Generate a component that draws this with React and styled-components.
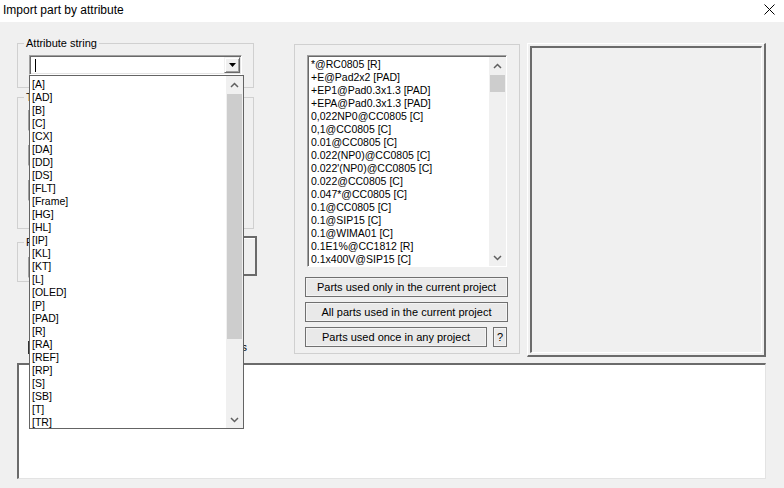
import React from "react";
import styled, { createGlobalStyle } from "styled-components";

const GlobalStyle = createGlobalStyle`
  html, body { margin: 0; padding: 0; background: #f0f0f0; }
  * { box-sizing: border-box; }
`;

const Window = styled.div`
  width: 784px;
  height: 488px;
  background: #f0f0f0;
  display: flex;
  flex-direction: column;
  overflow: hidden;
  font-family: "Liberation Sans", Arial, sans-serif;
  color: #000;
`;

const TitleBar = styled.div`
  height: 22px;
  flex: none;
  background: #fff;
  display: flex;
  align-items: flex-start;
  justify-content: space-between;
  padding: 3px 9px 0 3px;
  font-size: 12px;
  line-height: 14px;
`;

const CloseGlyph = styled.svg`
  margin-top: 1px;
`;

const Body = styled.div`
  flex: 1;
  display: flex;
  flex-direction: column;
  padding: 15px 18px 0 17px;
`;

const TopRow = styled.div`
  display: flex;
  align-items: flex-start;
`;

const LeftColumn = styled.div`
  width: 240px;
  flex: none;
  display: flex;
  flex-direction: column;
`;

const Group = styled.fieldset`
  margin: ${(p) => p.$mt || 0}px 0 0 0;
  padding: 0 ${(p) => p.$pr ?? 11}px ${(p) => p.$pb || 0}px ${(p) => p.$pl ?? 11}px;
  border: 1px solid #d0d0d0;
  width: ${(p) => p.$w}px;
  min-width: 0;
  flex: none;
`;

const Legend = styled.legend`
  font-size: 11px;
  line-height: 13px;
  padding: 0 2px;
  margin-left: ${(p) => p.$ml ?? -5}px;
  white-space: nowrap;
`;

const ComboAnchor = styled.div`
  position: relative;
  margin-top: 5px;
`;

const Combo = styled.div`
  width: 213px;
  height: 20px;
  background: #fff;
  display: flex;
  align-items: stretch;
  border: 1px solid;
  border-color: #a0a0a0 #fff #fff #a0a0a0;
  box-shadow: inset 1px 1px 0 #696969, inset -1px -1px 0 #e3e3e3;
  padding: 1px;
`;

const Caret = styled.span`
  width: 1px;
  height: 13px;
  background: #000;
  align-self: center;
  margin-left: 4px;
`;

const DropButton = styled.div`
  margin-left: auto;
  width: 16px;
  background: #f0f0f0;
  border: 1px solid;
  border-color: #f0f0f0 #696969 #696969 #f0f0f0;
  box-shadow: inset 1px 1px 0 #fff, inset -1px -1px 0 #a0a0a0;
  display: flex;
  align-items: center;
  justify-content: center;
`;

const DropList = styled.div`
  position: absolute;
  top: 100%;
  left: 0;
  width: 215px;
  height: 354px;
  background: #fff;
  border: 1px solid #646464;
  display: flex;
  z-index: 10;
  overflow: hidden;
`;

const Items = styled.div`
  flex: 1;
  min-width: 0;
  padding: ${(p) => p.$pt || 0}px 0 0 ${(p) => p.$pl || 2}px;
  overflow: hidden;
`;

const Item = styled.div`
  font-size: 10.5px;
  line-height: 13px;
  height: 13px;
  white-space: nowrap;
  color: #000;
`;

const ScrollBar = styled.div`
  width: 17px;
  flex: none;
  background: #f0f0f0;
  display: flex;
  flex-direction: column;
`;

const ScrollArrow = styled.div`
  height: 17px;
  flex: none;
  display: flex;
  align-items: center;
  justify-content: center;
`;

const ScrollTrack = styled.div`
  flex: 1;
  display: flex;
  flex-direction: column;
`;

const Thumb = styled.div`
  margin: ${(p) => p.$top}px 1px 0;
  height: ${(p) => p.$size}px;
  background: #cdcdcd;
`;

const SunkenEdit = styled.div`
  width: ${(p) => p.$w}px;
  height: 21px;
  margin-top: ${(p) => p.$mt || 0}px;
  background: #fff;
  border: 1px solid;
  border-color: #a0a0a0 #fff #fff #a0a0a0;
  box-shadow: inset 1px 1px 0 #696969, inset -1px -1px 0 #e3e3e3;
`;

const GroupInner = styled.div`
  height: ${(p) => p.$h}px;
  display: flex;
  flex-direction: column;
`;

const Row3 = styled.div`
  display: flex;
  align-items: flex-start;
`;

const DefaultButton = styled.div`
  margin: 7px 0 0 auto;
  width: 60px;
  height: 40px;
  background: #f0f0f0;
  border: 2px solid #6a6a6a;
  box-shadow: inset 1px 1px 0 #fff;
`;

const CheckRow = styled.div`
  margin: 59px 0 0 11px;
  width: 219px;
  height: 13px;
  display: flex;
  align-items: center;
`;

const CheckBox = styled.span`
  width: 13px;
  height: 13px;
  flex: none;
  background: #fff;
  border: 1px solid #333;
`;

const CheckLabel = styled.span`
  flex: 1;
  text-align: right;
  font-size: 11px;
  line-height: 13px;
  white-space: nowrap;
`;

const MiddlePanel = styled.div`
  margin: 7px 0 0 37px;
  width: 226px;
  height: 310px;
  flex: none;
  border: 1px solid #d0d0d0;
  padding: 10px 0 0 12px;
  display: flex;
  flex-direction: column;
`;

const ListBox = styled.div`
  width: 200px;
  height: 212px;
  background: #fff;
  border: 1px solid;
  border-color: #a0a0a0 #fff #fff #a0a0a0;
  box-shadow: inset 1px 1px 0 #696969;
  padding: 1px 0 0 1px;
  display: flex;
`;

const ButtonStack = styled.div`
  margin: 10px 0 0 -2px;
  display: flex;
  flex-direction: column;
  gap: 5px;
`;

const ButtonRow = styled.div`
  display: flex;
  gap: 6px;
`;

const PushButton = styled.div`
  width: ${(p) => p.$w}px;
  height: 20px;
  background: #e9e9e9;
  border: 1px solid #707070;
  box-shadow: inset 0 0 0 1px #f4f4f4;
  font-size: 11px;
  line-height: 18px;
  text-align: center;
  white-space: nowrap;
`;

const Preview = styled.div`
  margin: 6px 0 0 7px;
  width: 239px;
  height: 314px;
  flex: none;
  border-style: solid;
  border-width: 1px 2px 2px 1px;
  border-color: #fff #6b6b6b #6b6b6b #fff;
  padding: 2px;
`;

const PreviewInner = styled.div`
  height: 100%;
  border-style: solid;
  border-width: 2px 1px 1px 2px;
  border-color: #6b6b6b #fff #fff #6b6b6b;
`;

const Memo = styled.div`
  margin-top: 6px;
  width: 749px;
  height: 116px;
  background: #fff;
  border-style: solid;
  border-width: 2px 1px 1px 2px;
  border-color: #6b6b6b #e3e3e3 #e3e3e3 #6b6b6b;
`;

const Chevron = ({ up }) => (
  <svg width="9" height="6" viewBox="0 0 9 6">
    <path
      d={up ? "M1 5 L4.5 1.5 L8 5" : "M1 1 L4.5 4.5 L8 1"}
      stroke="#606060"
      strokeWidth="1.5"
      fill="none"
    />
  </svg>
);

const VScroll = ({ top, size }) => (
  <ScrollBar>
    <ScrollArrow>
      <Chevron up />
    </ScrollArrow>
    <ScrollTrack>
      <Thumb $top={top} $size={size} />
    </ScrollTrack>
    <ScrollArrow>
      <Chevron />
    </ScrollArrow>
  </ScrollBar>
);

const attrs = [
  "[A]", "[AD]", "[B]", "[C]", "[CX]", "[DA]", "[DD]", "[DS]", "[FLT]",
  "[Frame]", "[HG]", "[HL]", "[IP]", "[KL]", "[KT]", "[L]", "[OLED]", "[P]",
  "[PAD]", "[R]", "[RA]", "[REF]", "[RP]", "[S]", "[SB]", "[T]", "[TR]",
];

const parts = [
  "*@RC0805 [R]",
  "+E@Pad2x2 [PAD]",
  "+EP1@Pad0.3x1.3 [PAD]",
  "+EPA@Pad0.3x1.3 [PAD]",
  "0,022NP0@CC0805 [C]",
  "0,1@CC0805 [C]",
  "0.01@CC0805 [C]",
  "0.022(NP0)@CC0805 [C]",
  "0.022'(NP0)@CC0805 [C]",
  "0.022@CC0805 [C]",
  "0.047*@CC0805 [C]",
  "0.1@CC0805 [C]",
  "0.1@SIP15 [C]",
  "0.1@WIMA01 [C]",
  "0.1E1%@CC1812 [R]",
  "0.1x400V@SIP15 [C]",
];

export default function App() {
  return (
    <>
      <GlobalStyle />
      <Window>
        <TitleBar>
          <span>Import part by attribute</span>
          <CloseGlyph width="11" height="11" viewBox="0 0 11 11">
            <path d="M0.5 0.5 L10.5 10.5 M10.5 0.5 L0.5 10.5" stroke="#000" strokeWidth="1" />
          </CloseGlyph>
        </TitleBar>
        <Body>
          <TopRow>
            <LeftColumn>
              <Group $w={237} $pb={12}>
                <Legend>Attribute string</Legend>
                <ComboAnchor>
                  <Combo>
                    <Caret />
                    <DropButton>
                      <svg width="7" height="4" viewBox="0 0 7 4">
                        <path d="M0 0 H7 L3.5 4 Z" fill="#000" />
                      </svg>
                    </DropButton>
                  </Combo>
                  <DropList>
                    <Items $pt={2} $pl={2}>
                      {attrs.map((a) => (
                        <Item key={a}>{a}</Item>
                      ))}
                    </Items>
                    <VScroll top={1} size={245} />
                  </DropList>
                </ComboAnchor>
              </Group>
              <Group $w={237} $mt={3} $pl={10}>
                <Legend $ml={-4}>Type</Legend>
                <GroupInner $h={124}>
                  <SunkenEdit $w={190} $mt={6} />
                  <SunkenEdit $w={190} $mt={14} />
                  <SunkenEdit $w={190} $mt={14} />
                </GroupInner>
              </Group>
              <Row3>
                <Group $w={175} $mt={7} $pl={10} $pb={3}>
                  <Legend $ml={-4}>Filter</Legend>
                  <SunkenEdit $w={140} $mt={8} />
                </Group>
                <DefaultButton />
              </Row3>
              <CheckRow>
                <CheckBox />
                <CheckLabel>Show parts with all attributes</CheckLabel>
              </CheckRow>
            </LeftColumn>
            <MiddlePanel>
              <ListBox>
                <Items $pt={1} $pl={2}>
                  {parts.map((p) => (
                    <Item key={p}>{p}</Item>
                  ))}
                </Items>
                <VScroll top={1} size={17} />
              </ListBox>
              <ButtonStack>
                <PushButton $w={203}>Parts used only in the current project</PushButton>
                <PushButton $w={203}>All parts used in the current project</PushButton>
                <ButtonRow>
                  <PushButton $w={182}>Parts used once in any project</PushButton>
                  <PushButton $w={14}>?</PushButton>
                </ButtonRow>
              </ButtonStack>
            </MiddlePanel>
            <Preview>
              <PreviewInner />
            </Preview>
          </TopRow>
          <Memo />
        </Body>
      </Window>
    </>
  );
}
